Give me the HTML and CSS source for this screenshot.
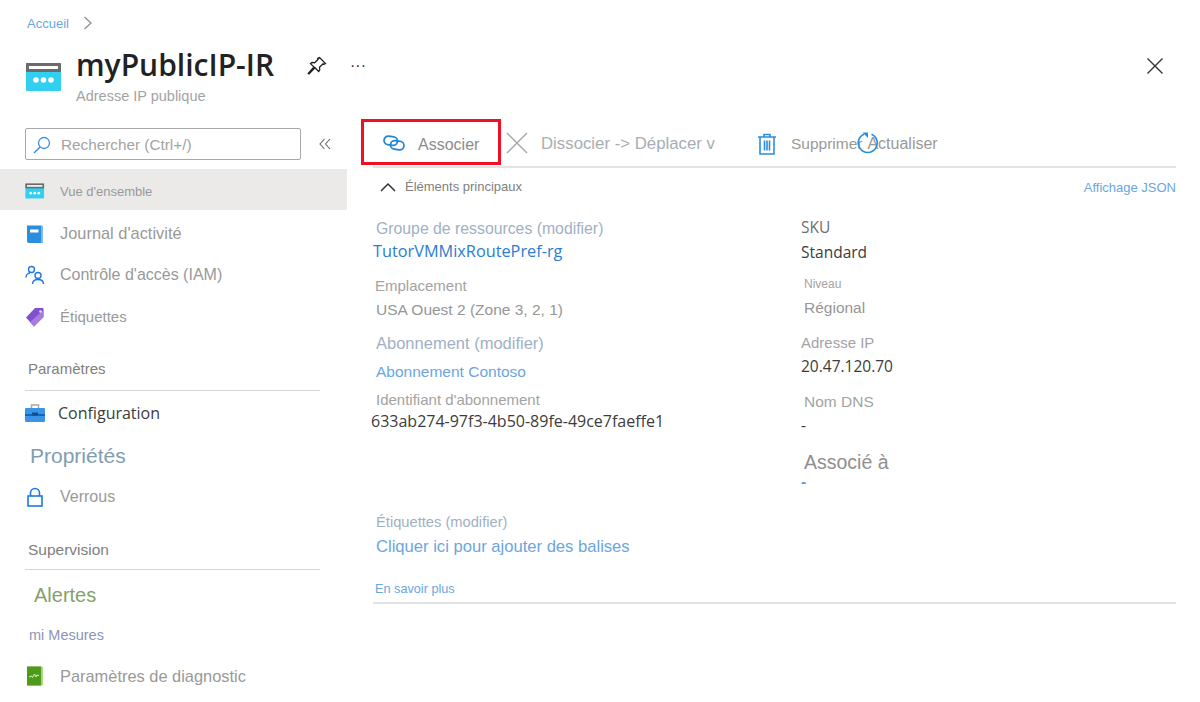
FILE: index.html
```html
<!DOCTYPE html>
<html lang="fr">
<head>
    <meta charset="UTF-8">
    <title>myPublicIP-IR</title>
    <link rel="stylesheet" href="styles.css">
</head>
<body>
    <div class="crumb">
        <a href="#">Accueil</a>
        <svg width="10" height="14" viewBox="0 0 10 14"><path d="M1.500 1l6.500 6-6.500 6" fill="none" stroke="#8a8a8a" stroke-width="1.200"/></svg>
    </div>
    <header class="top">
        <svg class="top-icon" width="36" height="30" viewBox="0 0 36 30">
            <rect y="1" width="35" height="28" rx="1" fill="#32d0f0"/>
            <path d="M0 2a1 1 0 0 1 1-1h33a1 1 0 0 1 1 1v8H0z" fill="#6b6b6b"/>
            <rect x="3" y="4" width="29" height="3" fill="#fff"/>
            <circle cx="10" cy="18" r="2.800" fill="#fff"/><circle cx="17.500" cy="18" r="2.800" fill="#fff"/><circle cx="25" cy="18" r="2.800" fill="#fff"/>
        </svg>
        <div class="top-text">
            <h1>myPublicIP-IR</h1>
            <p>Adresse IP publique</p>
        </div>
        <svg class="pin" width="20" height="20" viewBox="0 0 20 20"><path d="M12.500 1.500l6 6-1.500.8-1-.6-3.500 3.500c.6 1.800.2 3.300-.8 4.300L8 11.800 2 18l-.8-.6L7 11 3.400 7.600c1-1 2.600-1.400 4.300-.8l3.500-3.500-.5-1z" fill="none" stroke="#222" stroke-width="1.300"/></svg>
        <span class="more">···</span>
        <svg class="close" width="18" height="18" viewBox="0 0 18 18"><path d="M1.500 1.500l15 15M16.500 1.500l-15 15" stroke="#333" stroke-width="1.400"/></svg>
    </header>

    <div class="page">
        <aside class="side">
            <div class="search-row">
                <div class="search">
                    <svg width="20" height="20" viewBox="0 0 20 20"><circle cx="12" cy="8" r="5.500" fill="none" stroke="#3a8fdc" stroke-width="1.300"/><path d="M8 12l-6 6" stroke="#3a8fdc" stroke-width="1.500"/></svg>
                    <span>Rechercher (Ctrl+/)</span>
                </div>
                <svg class="collapse" width="12" height="12" viewBox="0 0 12 12"><path d="M5.500 1L1 6l4.500 5M11 1L6.500 6l4.500 5" fill="none" stroke="#666" stroke-width="1.100"/></svg>
            </div>
            <nav>
                <a class="item active" href="#">
                    <svg width="20" height="16" viewBox="0 0 36 30"><rect y="1" width="35" height="28" fill="#32d0f0"/><rect width="35" height="9" y="1" fill="#6b6b6b"/><rect x="3" y="4" width="29" height="3" fill="#fff"/><circle cx="10" cy="19" r="2.500" fill="#fff"/><circle cx="17.500" cy="19" r="2.500" fill="#fff"/><circle cx="25" cy="19" r="2.500" fill="#fff"/></svg>
                    <span class="small">Vue d'ensemble</span>
                </a>
                <a class="item" href="#">
                    <svg width="20" height="20" viewBox="0 0 20 20"><path d="M2 1.500h14a2 2 0 0 1 2 2V19H4a2 2 0 0 1-2-2z" fill="#2a8ee0"/><path d="M16 1.500a2 2 0 0 1 2 2V19h-2z" fill="#7cbcf0"/><rect x="5" y="5.500" width="8.500" height="3" fill="#fff"/></svg>
                    <span class="journal">Journal d'activité</span>
                </a>
                <a class="item" href="#">
                    <svg width="20" height="20" viewBox="0 0 20 20" fill="none" stroke="#1f78e0" stroke-width="1.400"><circle cx="6.500" cy="4.500" r="3"/><circle cx="13" cy="10.500" r="3"/><path d="M1 12.500c0-3 2-4.500 4-4.500M7.500 19c0-3 2-4.500 5.500-4.500s5.500 1.500 5.500 4.500"/></svg>
                    <span>Contrôle d'accès (IAM)</span>
                </a>
                <a class="item" href="#">
                    <svg width="20" height="20" viewBox="0 0 20 20"><path d="M10 1h7.500a1 1 0 0 1 1 1v8L9 19.500 1 10.500z" fill="#8150d0"/><path d="M18.500 3v7L9 19.500 5 15z" fill="#a77be0"/><circle cx="15.500" cy="4.500" r="1.300" fill="#e8dcf8"/></svg>
                    <span class="tags-name">Étiquettes</span>
                </a>
            </nav>
            <h2 class="sec sec-param">Paramètres</h2>
            <a class="item item-config" href="#">
                <svg width="20" height="20" viewBox="0 0 20 20"><path d="M6.500 5V2h7v3" fill="none" stroke="#a8a8a8" stroke-width="1.500"/><rect y="5" width="20" height="14" rx="1" fill="#3a96e4"/><rect y="11" width="20" height="2" fill="#1466b8"/><rect x="7" y="9.500" width="6" height="3" fill="#0f4f90"/></svg>
                <span>Configuration</span>
            </a>
            <div class="big big-prop">Propriétés</div>
            <a class="item item-lock" href="#">
                <svg width="20" height="20" viewBox="0 0 20 20" fill="none" stroke="#1f78e0" stroke-width="1.600"><rect x="3" y="9" width="14" height="10"/><path d="M5.500 9V6a4.500 4.500 0 0 1 9 0v3"/></svg>
                <span>Verrous</span>
            </a>
            <h2 class="sec sec-super">Supervision</h2>
            <div class="big big-alert">Alertes</div>
            <div class="mesures">mi Mesures</div>
            <a class="item item-diag" href="#">
                <svg width="20" height="20" viewBox="0 0 20 20"><rect x="2" y="0.500" width="16" height="19" rx="1" fill="#a9d48a"/><rect x="2" y="0.500" width="14" height="19" fill="#4f9a1a"/><path d="M4 11l2.500-1 1 1.500L9.500 8l1.500 3 1-2 2 .5" fill="none" stroke="#d8f0c0" stroke-width="1"/></svg>
                <span class="diag">Paramètres de diagnostic</span>
            </a>
        </aside>

        <main class="main">
            <div class="toolbar">
                <button class="tool tool-assoc">
                    <svg width="22" height="16" viewBox="0 0 22 16" fill="none" stroke="#1f85d8" stroke-width="1.700"><rect x="1" y="1.500" width="13.500" height="8.500" rx="4.250" transform="rotate(8 7.750 5.750)"/><rect x="7.500" y="6" width="13.500" height="8.500" rx="4.250" transform="rotate(8 14.250 10.250)"/></svg>
                    <span>Associer</span>
                </button>
                <svg class="x-icon" width="24" height="24" viewBox="0 0 24 24"><path d="M2 2l20 20M22 2L2 22" stroke="#a6a6a6" stroke-width="1.400"/></svg>
                <span class="tool-off dissoc">Dissocier -&gt; Déplacer v</span>
                <svg class="trash" width="20" height="22" viewBox="0 0 20 22" fill="none" stroke="#2a8ee0" stroke-width="1.600"><path d="M1 4h18M7 4V1.500h6V4M3 4v17h14V4M7.500 7.500v10M10 7.500v10M12.500 7.500v10"/></svg>
                <span class="tool-off suppr">Supprimer</span>
                <span class="tool-off actu">Actualiser</span>
                <svg class="refresh" width="22" height="24" viewBox="0 0 22 24" fill="none"><path d="M14.500 3.200a9.500 9.500 0 1 1-7.500 0" stroke="#2a8ee0" stroke-width="1.600"/><path d="M5.500 1.500h5.500v5.500z" fill="#2a8ee0"/></svg>
            </div>
            <div class="essentials">
                <svg width="16" height="10" viewBox="0 0 16 10"><path d="M1 9l7-7 7 7" fill="none" stroke="#333" stroke-width="1.500"/></svg>
                <span class="ess-title">Éléments principaux</span>
                <a class="json" href="#">Affichage JSON</a>
            </div>
            <div class="cols">
                <div class="col-left">
                    <div class="l lbl-link l1">Groupe de ressources (modifier)</div>
                    <a class="l rg" href="#">TutorVMMixRoutePref-rg</a>
                    <div class="l lbl l3">Emplacement</div>
                    <div class="l val l4">USA Ouest 2 (Zone 3, 2, 1)</div>
                    <div class="l lbl-link l5">Abonnement (modifier)</div>
                    <a class="l link l6" href="#">Abonnement Contoso</a>
                    <div class="l lbl l7">Identifiant d'abonnement</div>
                    <div class="l dark l8">633ab274-97f3-4b50-89fe-49ce7faeffe1</div>
                </div>
                <div class="col-right">
                    <div class="l sku">SKU</div>
                    <div class="l dark">Standard</div>
                    <div class="l tiny r3">Niveau</div>
                    <div class="l val r4">Régional</div>
                    <div class="l lbl r5">Adresse IP</div>
                    <div class="l dark r6">20.47.120.70</div>
                    <div class="l lbl r7">Nom DNS</div>
                    <div class="l dark r8">-</div>
                    <div class="l assoc">Associé à</div>
                    <div class="l link r10">-</div>
                </div>
            </div>
            <div class="l lbl-link tags">Étiquettes (modifier)</div>
            <a class="l link add-tags" href="#">Cliquer ici pour ajouter des balises</a>
            <a class="l more-link" href="#">En savoir plus</a>
            <div class="end-line"></div>
        </main>
    </div>
</body>
</html>
```

FILE: styles.css
```css
body {
    margin: 0;
    height: 702px;
    overflow: hidden;
    background: #fff;
    font-family: "Liberation Sans", Arial, sans-serif;
    font-size: 15px;
    color: #8c8c8c;
}
a {
    text-decoration: none;
}
.crumb {
    display: flex;
    align-items: center;
    gap: 14px;
    height: 16px;
    padding: 15px 0 0 27px;
    font-size: 13px;
}
.crumb a {
    color: #6aa6e0;
}
.top {
    display: flex;
    align-items: flex-start;
    height: 97px;
    padding-left: 26px;
}
.top-icon {
    margin-top: 31px;
}
.top-text {
    margin-left: 14px;
    margin-top: 14px;
    width: 231px;
}
.top-text h1 {
    margin: 0;
    font: 600 30px/40px "Open Sans", sans-serif;
    color: #222;
    white-space: nowrap;
}
.top-text p {
    margin: 1px 0 0;
    font-size: 14.500px;
    color: #a3a3a3;
    line-height: 20px;
}
.pin {
    margin-top: 25px;
}
.more {
    margin: 24px 0 0 23px;
    font-size: 16px;
    line-height: 22px;
    color: #333;
}
.close {
    margin: 26px 36px 0 auto;
}
.page {
    display: flex;
}
.side {
    width: 347px;
    flex: none;
}
.search-row {
    display: flex;
    align-items: center;
    height: 32px;
    padding-left: 25px;
}
.search {
    display: flex;
    align-items: center;
    gap: 9px;
    box-sizing: border-box;
    width: 276px;
    height: 32px;
    padding: 1px 0 0 6px;
    border: 1px solid #a8a8a8;
    border-radius: 2px;
    font-size: 15.300px;
    color: #a3a3a3;
}
.collapse {
    margin-left: 18px;
}
nav {
    margin-top: 9px;
}
.item {
    display: flex;
    align-items: center;
    gap: 15px;
    height: 41.500px;
    padding-left: 25px;
    color: #999;
    font-size: 16px;
}
.item svg {
    flex: none;
}
.item.active {
    box-sizing: border-box;
    height: 41px;
    margin-bottom: 3px;
    padding-top: 3px;
    background: #ebeae8;
}
.small {
    font-size: 13px;
}
.journal {
    font-size: 16.400px;
}
.tags-name {
    font-size: 15px;
}
.sec {
    margin: 0 27px 0 25px;
    padding: 0 0 11px 3px;
    border-bottom: 1px solid #d4d4d4;
    font-weight: normal;
    font-size: 15px;
    line-height: 20px;
    color: #808080;
}
.sec-param {
    margin-top: 21px;
}
.sec-super {
    margin-top: 17px;
    padding-bottom: 9px;
    font-size: 15.500px;
}
.item-config {
    height: 44px;
    gap: 13px;
    color: #3c3c3c;
    font: 16px "Open Sans", sans-serif;
}
.big {
    font-size: 20px;
    line-height: 28px;
}
.big-prop {
    padding-left: 30px;
    margin-top: 7px;
    font-size: 21px;
    color: #7f9db2;
}
.item-lock {
    height: 52px;
    margin-top: 1px;
}
.big-alert {
    padding-left: 34px;
    margin-top: 11px;
    color: #86a068;
}
.mesures {
    padding-left: 29px;
    margin-top: 17px;
    font-size: 14.500px;
    line-height: 18px;
    color: #8d94b8;
}
.item-diag {
    margin-top: 12px;
}
.diag {
    font-size: 16.400px;
}
.main {
    width: 803px;
    margin-left: 26px;
}
.toolbar {
    display: flex;
    align-items: center;
    position: relative;
    height: 38px;
    border-bottom: 2px solid #e2e2e2;
}
.tool {
    display: flex;
    align-items: center;
    gap: 13px;
    box-sizing: border-box;
    flex: none;
    width: 140px;
    height: 46px;
    margin: -10px 0 0 -12px;
    padding: 2px 0 0 19px;
    border: 3px solid #ee1122;
    background: #fff;
    font: 16px "Liberation Sans", sans-serif;
    color: #8c8c8c;
}
.tool span {
    padding-top: 3px;
}
.x-icon {
    margin-left: 4px;
    margin-top: -8px;
}
.tool-off {
    font-size: 16px;
    color: #a8adb3;
    margin-top: -7px;
    white-space: nowrap;
}
.dissoc {
    margin-left: 12px;
    font-size: 16.800px;
}
.trash {
    margin-left: 42px;
    margin-top: -6px;
}
.suppr {
    margin-left: 14px;
    font-size: 15.500px;
    color: #999;
}
.actu {
    margin-left: 5px;
    color: #999;
}
.refresh {
    position: absolute;
    left: 484px;
    top: 3px;
}
.essentials {
    display: flex;
    align-items: center;
    height: 37px;
    padding-left: 7px;
}
.ess-title {
    margin-left: 9px;
    font-size: 13px;
    color: #808080;
}
.json {
    margin-left: auto;
    padding-top: 2px;
    font-size: 13px;
    color: #6aa6e0;
}
.cols {
    display: flex;
    margin-top: 12px;
}
.col-left {
    width: 428px;
    flex: none;
}
.col-right {
    margin-top: -1px;
}
.l {
    display: block;
    line-height: 24px;
    height: 24px;
    white-space: nowrap;
}
.lbl {
    font-size: 15px;
    color: #a3a3a3;
    padding-left: 2px;
}
.lbl-link {
    font-size: 15.500px;
    color: #9fb0c4;
    padding-left: 3px;
}
.val {
    font-size: 15.500px;
    color: #969696;
    padding-left: 3px;
}
.rg {
    font: 16.300px/24px "Open Sans", sans-serif;
    color: #2b7cd3;
    margin-top: -2px;
}
.link {
    font-size: 15.500px;
    color: #6aa6e0;
    padding-left: 3px;
}
.dark {
    font: 15.500px/24px "Open Sans", sans-serif;
    color: #3c3c3c;
}
.l1 { font-size: 15.800px; }
.l3 { margin-top: 11px; }
.l5 { margin-top: 9px; font-size: 16.500px; }
.l6 { margin-top: 5px; }
.l7 { margin-top: 4px; padding-left: 3px; }
.l8 { margin-left: -2px; margin-top: -3px; font-size: 16px; }
.sku {
    margin: -1px 0 1px;
    font: 15.500px/24px "Open Sans", sans-serif;
    color: #6e6e6e;
}
.tiny {
    font-size: 12px;
    color: #a3a3a3;
    padding-left: 3px;
}
.r3 { margin-top: 8px; }
.r5 { margin-top: 11px; padding-left: 0; }
.r6 { margin-top: -1px; }
.r7 { margin-top: 12px; padding-left: 3px; font-size: 15.500px; }
.r8 { margin-top: -1px; }
.assoc {
    margin-top: 13px;
    padding-left: 3px;
    font-size: 19.500px;
    color: #8f8f8f;
}
.r10 {
    margin-top: -4px;
    padding-left: 0;
    font-weight: bold;
    color: #4a9ae8;
}
.tags {
    margin-top: 16px;
    padding-left: 3px;
    font-size: 14.700px;
}
.add-tags {
    margin-top: 1px;
    padding-left: 3px;
    font-size: 16.600px;
}
.more-link {
    margin-top: 18px;
    padding-left: 2px;
    font-size: 12.700px;
    color: #6aa6e0;
}
.end-line {
    border-bottom: 2px solid #e2e2e2;
    margin-top: 1px;
}
```
